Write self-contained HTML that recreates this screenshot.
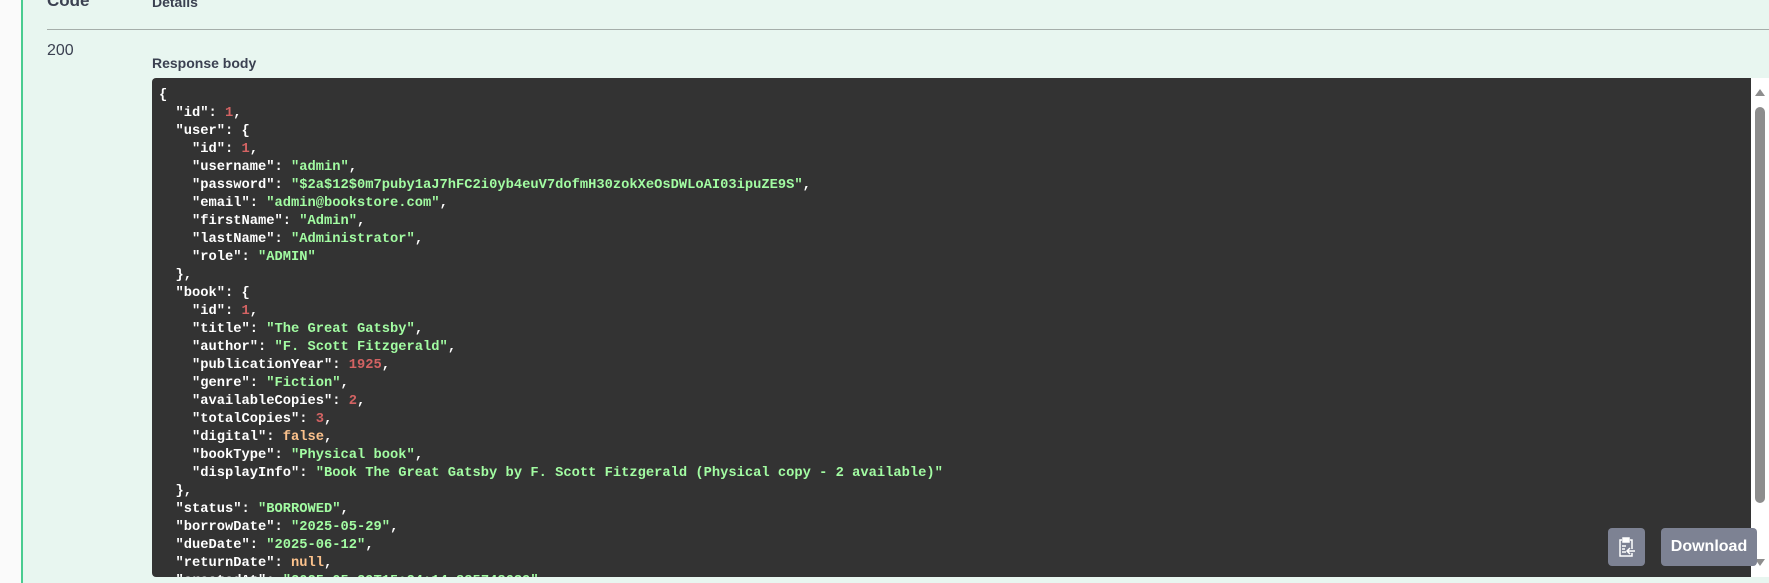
<!DOCTYPE html>
<html><head><meta charset="utf-8"><style>
*{margin:0;padding:0;box-sizing:border-box}
html,body{width:1769px;height:583px;overflow:hidden;background:#fafafa;font-family:"Liberation Sans",sans-serif}
.main{position:absolute;left:21px;top:0;width:1748px;height:583px;background:#e8f6f0;border-left:2px solid #49cc90}
.abs{position:absolute}
.code{position:absolute;left:152px;top:78px;width:1599px;height:499px;background:#333;border-radius:4px 0 0 4px;overflow:hidden}
pre{position:absolute;left:7px;top:9px;font-family:"Liberation Mono",monospace;font-weight:bold;font-size:13.75px;line-height:18px;color:#fff;white-space:pre}
.n{color:#d36363}.s{color:#a2fca2}.b{color:#fcc28c}
.sb{position:absolute;left:1751px;top:78px;width:18px;height:499px;background:#fff}
.btn{position:absolute;top:528px;height:38px;background:#7d8293;border-radius:4px;color:#fff;font-weight:bold;font-size:16px;line-height:38px;text-align:center}
</style></head><body>
<div class="main"></div>
<div class="abs" style="left:47px;top:-9px;font-size:17px;font-weight:bold;color:#3b4151">Code</div>
<div class="abs" style="left:152px;top:-6px;font-size:14px;font-weight:bold;color:#3b4151">Details</div>
<div class="abs" style="left:47px;top:29px;width:1722px;height:1px;background:#a5aeaa"></div>
<div class="abs" style="left:47px;top:42px;font-size:16px;color:#3b4151">200</div>
<div class="abs" style="left:152px;top:55px;font-size:14px;font-weight:bold;color:#3b4151">Response body</div>
<div class="code"><pre>{
  "id": <span class="n">1</span>,
  "user": {
    "id": <span class="n">1</span>,
    "username": <span class="s">"admin"</span>,
    "password": <span class="s">"$2a$12$0m7puby1aJ7hFC2i0yb4euV7dofmH30zokXeOsDWLoAI03ipuZE9S"</span>,
    "email": <span class="s">"admin@bookstore.com"</span>,
    "firstName": <span class="s">"Admin"</span>,
    "lastName": <span class="s">"Administrator"</span>,
    "role": <span class="s">"ADMIN"</span>
  },
  "book": {
    "id": <span class="n">1</span>,
    "title": <span class="s">"The Great Gatsby"</span>,
    "author": <span class="s">"F. Scott Fitzgerald"</span>,
    "publicationYear": <span class="n">1925</span>,
    "genre": <span class="s">"Fiction"</span>,
    "availableCopies": <span class="n">2</span>,
    "totalCopies": <span class="n">3</span>,
    "digital": <span class="b">false</span>,
    "bookType": <span class="s">"Physical book"</span>,
    "displayInfo": <span class="s">"Book The Great Gatsby by F. Scott Fitzgerald (Physical copy - 2 available)"</span>
  },
  "status": <span class="s">"BORROWED"</span>,
  "borrowDate": <span class="s">"2025-05-29"</span>,
  "dueDate": <span class="s">"2025-06-12"</span>,
  "returnDate": <span class="b">null</span>,
  "createdAt": <span class="s">"2025-05-29T15:24:14.885748639"</span>,
</pre></div>
<div class="sb">
  <svg width="18" height="499" style="position:absolute;left:0;top:0">
    <polygon points="4,18 9,11 14,18" fill="#8d8d8d"/>
    <rect x="4" y="29" width="10" height="396" rx="5" fill="#8d8d8d"/>
    <polygon points="4,481 9,488 14,481" fill="#8d8d8d"/>
  </svg>
</div>
<div class="btn" style="left:1608px;width:37px">
  <svg width="37" height="38" viewBox="0 0 37 38" style="position:absolute;left:0;top:0">
    <g fill="none" stroke="#fff" stroke-width="1.5">
      <path d="M14 12h-2v16h12v-3M24 21v-9h-2"/>
      <rect x="15" y="10" width="6" height="4" fill="#fff"/>
      <path d="M14 18h4M14 21h3M14 24h4M27 23h-7M22 20l-3 3 3 3"/>
    </g>
  </svg>
</div>
<div class="btn" style="left:1661px;width:96px">Download</div>
</body></html>
